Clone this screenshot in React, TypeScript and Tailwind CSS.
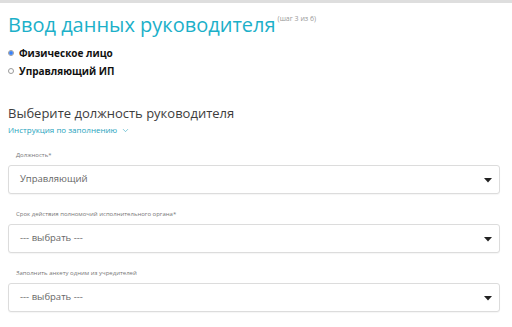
import { ChevronDown } from 'lucide-react'

const font = { fontFamily: '"Open Sans", "Liberation Sans", sans-serif' }

function Radio({ checked, label }: { checked?: boolean; label: string }) {
  return (
    <label className="flex items-center gap-[5px] h-[18px]">
      <span className="w-[6px] h-[6px] rounded-full border border-[#9a9a9a] bg-white flex items-center justify-center">
        {checked && <span className="w-[4px] h-[4px] rounded-full bg-[#3b82f6]" />}
      </span>
      <span className="text-[10px] font-bold text-[#111] leading-none">{label}</span>
    </label>
  )
}

function SelectField({ label, value }: { label: string; value: string }) {
  return (
    <div className="flex flex-col">
      <div className="text-[6px] text-[#777] pl-[8px] h-[9px] leading-[9px] mb-[5px]">{label}</div>
      <div className="h-[29px] border border-[#dcdcdc] rounded-[3px] bg-white flex items-center justify-between pl-[11px] pr-[6px] shadow-[0_1px_1px_rgba(0,0,0,0.04)]">
        <span className="text-[9.5px] text-[#666]">{value}</span>
        <svg width="8" height="5" viewBox="0 0 8 5" className="mr-[1px] mt-[2px]">
          <path d="M0 0 H8 L4 4.5 Z" fill="#222" />
        </svg>
      </div>
    </div>
  )
}

export default function App() {
  return (
    <div className="w-[512px] h-[327px] bg-white overflow-hidden" style={font}>
      <div className="h-[3px] bg-[#dedede]" />
      <div className="px-[8px] pr-[12px]">
        <div className="flex items-start mt-[8px]">
          <h1 className="text-[20px] leading-[28px] text-[#1cb0c9] font-normal">
            Ввод данных руководителя
          </h1>
          <span className="text-[7px] text-[#999] ml-[2px] mt-[3px]">(шаг 3 из 6)</span>
        </div>
        <div className="flex flex-col mt-[5px]">
          <Radio checked label="Физическое лицо" />
          <Radio label="Управляющий ИП" />
        </div>
        <h2 className="text-[13px] leading-[20px] text-[#3d3d3d] mt-[23px]">Выберите должность руководителя</h2>
        <div className="flex items-center gap-[4px] mt-[1px] text-[8px] text-[#23a3bd]">
          <span>Инструкция по заполнению</span>
          <ChevronDown size={9} strokeWidth={1.5} />
        </div>
        <div className="flex flex-col gap-[16px] mt-[15px]">
          <SelectField label="Должность*" value="Управляющий" />
          <SelectField label="Срок действия полномочий исполнительного органа*" value="--- выбрать ---" />
          <SelectField label="Заполнить анкету одним из учредителей" value="--- выбрать ---" />
        </div>
      </div>
    </div>
  )
}
